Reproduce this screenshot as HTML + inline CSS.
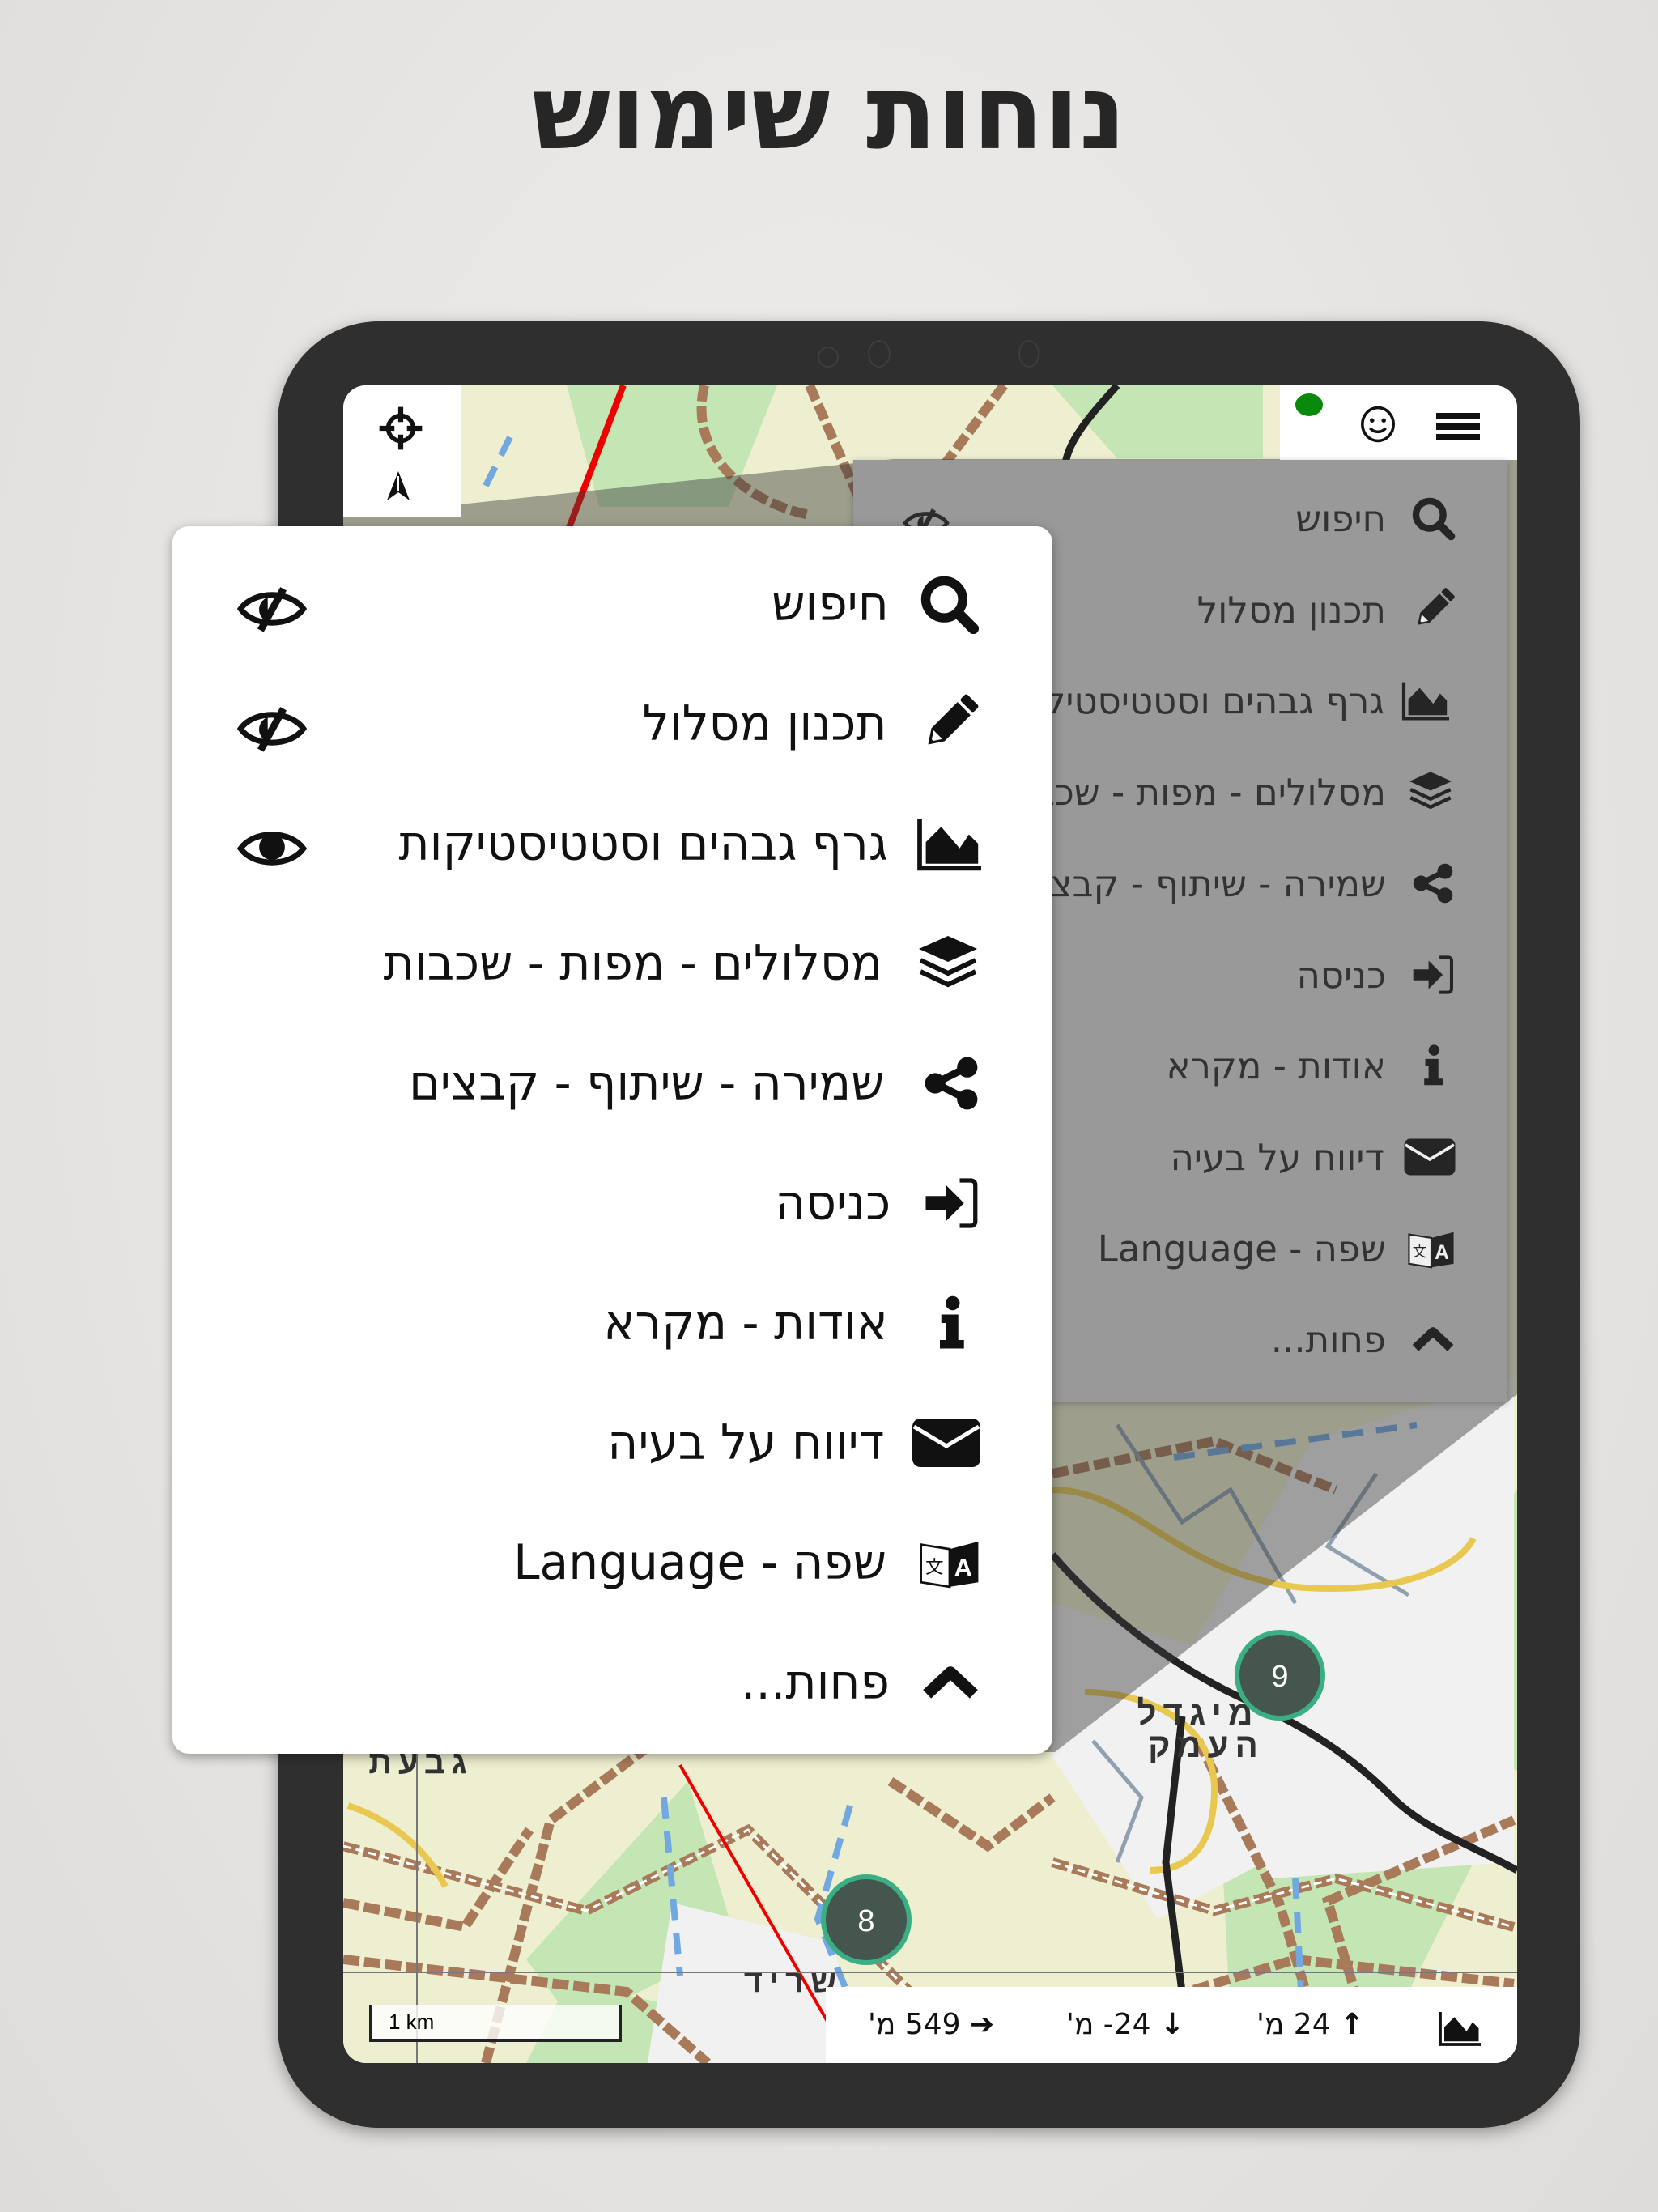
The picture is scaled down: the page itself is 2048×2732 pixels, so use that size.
<!DOCTYPE html>
<html><head><meta charset="utf-8"><style>
html,body{margin:0;padding:0}
body{width:2048px;height:2732px;position:relative;overflow:hidden;background:radial-gradient(ellipse at 50% 40%,#f1efed 0%,#e6e4e2 60%,#dedcda 100%);font-family:"Liberation Sans","Noto Sans CJK JP","DejaVu Sans",sans-serif}
.abs{position:absolute}
h1{position:absolute;left:0;width:2048px;top:60px;margin:0;text-align:center;font-size:128px;font-weight:bold;color:#262626;line-height:160px;font-family:"DejaVu Sans","Liberation Sans",sans-serif}
.tab{left:343px;top:397px;width:1609px;height:2231px;background:#2f2f2f;border-radius:125px;box-shadow:0 6px 20px rgba(0,0,0,.35)}
.screen{left:424px;top:476px;width:1450px;height:2072px;border-radius:28px;overflow:hidden;background:#eeeed2}
.row{position:absolute;display:flex;align-items:center;direction:rtl}
.pop{left:213px;top:650px;width:1087px;height:1516px;background:#fff;border-radius:20px;box-shadow:0 4px 14px rgba(0,0,0,.35)}
.pop .t{font-size:60px;color:#111;white-space:nowrap;font-family:"DejaVu Sans","Liberation Sans",sans-serif;font-weight:normal;transform:scaleX(.97)}
.gm .t{font-size:45px;color:#222;white-space:nowrap;font-family:"DejaVu Sans","Liberation Sans",sans-serif}
.bt{position:absolute;white-space:nowrap;direction:ltr;unicode-bidi:bidi-override}
</style></head><body>
<svg width="0" height="0" style="position:absolute">
<defs>
<symbol id="srch" viewBox="0 0 40 40"><circle cx="17" cy="17" r="12" fill="none" stroke="#111" stroke-width="6"/><path d="M26 26l10 10" stroke="#111" stroke-width="7" stroke-linecap="round"/></symbol>
<symbol id="pen" viewBox="0 0 40 40"><g transform="rotate(45 20 20)"><rect x="14" y="-2" width="12" height="6" rx="1.5" fill="#111"/><path d="M14 6h12v24l-6 9-6-9z" fill="#111"/><path d="M16 30l4 6 4-6z" fill="#fff"/><path d="M18.5 35l1.5 3 1.5-3z" fill="#111"/></g></symbol>
<symbol id="chart" viewBox="0 0 44 40"><path d="M2 4v32h40" fill="none" stroke="#111" stroke-width="3"/><path d="M6 33l0-14 10-10 12 14 6-9 6 6v13z" fill="#111"/></symbol>
<symbol id="lay" viewBox="0 0 40 40"><path d="M20 3l18 8-18 8-18-8z" fill="#111"/><path d="M3 18l17 8 17-8M3 25l17 8 17-8" fill="none" stroke="#111" stroke-width="3"/></symbol>
<symbol id="share" viewBox="0 0 40 40"><circle cx="31" cy="9" r="7" fill="#111"/><circle cx="9" cy="20" r="7" fill="#111"/><circle cx="31" cy="31" r="7" fill="#111"/><path d="M9 20L31 9M9 20l22 11" stroke="#111" stroke-width="5"/></symbol>
<symbol id="login" viewBox="0 0 40 40"><path d="M2 15h14V7l13 13-13 13v-8H2z" fill="#111"/><path d="M26 4h8a3 3 0 013 3v26a3 3 0 01-3 3h-8" fill="none" stroke="#111" stroke-width="3"/></symbol>
<symbol id="info" viewBox="0 0 40 40"><circle cx="21" cy="6" r="5" fill="#111"/><path d="M13 14h12v18h4v6H12v-6h4V20h-3z" fill="#111"/></symbol>
<symbol id="mail" viewBox="0 0 44 32"><rect x="1" y="1" width="42" height="30" rx="5" fill="#111"/><path d="M2 6l20 12 20-12" fill="none" stroke="#fff" stroke-width="2.5"/></symbol>
<symbol id="lang" viewBox="0 0 44 40"><path d="M3 8l19 3v25L3 33z" fill="#fff" stroke="#111" stroke-width="1.5"/><path d="M22 11l19-5v27l-19 3z" fill="#111"/><text x="31" y="29" font-size="17" font-weight="bold" fill="#fff" text-anchor="middle" font-family="Liberation Sans">A</text><text x="12" y="27" font-size="12" fill="#111" text-anchor="middle" font-family="Noto Sans CJK JP">文</text></symbol>
<symbol id="up" viewBox="0 0 40 40"><path d="M4 28l16-15 16 15" fill="none" stroke="#111" stroke-width="8" stroke-linejoin="round"/></symbol>
<symbol id="eyes" viewBox="0 0 50 34"><path d="M3 17C12 4 38 4 47 17 38 30 12 30 3 17z" fill="none" stroke="#111" stroke-width="4"/><path d="M22 9a9 9 0 000 17" fill="#111"/><path d="M33 3L17 32" stroke="#111" stroke-width="5"/></symbol>
<symbol id="eye" viewBox="0 0 50 34"><path d="M3 17C12 4 38 4 47 17 38 30 12 30 3 17z" fill="none" stroke="#111" stroke-width="4"/><circle cx="25" cy="16" r="9" fill="#111"/></symbol>
</defs></svg>

<h1>נוחות שימוש</h1>
<div class="abs tab"></div>
<div class="abs" style="left:1010px;top:428px;width:22px;height:22px;border-radius:50%;border:2px solid #3d3d3d"></div>
<div class="abs" style="left:1072px;top:420px;width:24px;height:30px;border-radius:50%;border:2px solid #3d3d3d"></div>
<div class="abs" style="left:1258px;top:420px;width:22px;height:30px;border-radius:50%;border:2px solid #3d3d3d"></div>

<div class="abs screen">
<svg width="1450" height="2072" viewBox="424 476 1450 2072" style="position:absolute;left:0;top:0">
<rect x="424" y="476" width="1450" height="2072" fill="#eeeed0"/>
<g fill="#c4e6b4">
<path d="M700 476h260l-60 150h-160z"/><path d="M1300 476h260v90h-180z"/><path d="M1050 1800h200v250h-200z"/>
<path d="M1500 2100l300-100 70 200-150 300h-200z"/><path d="M850 2200l60 200-200 100-60-80z"/><path d="M1900 1800l0 400-200-100z"/>
<path d="M700 2450l250 50 -50 48h-250z"/>
</g>
<g fill="#f1f1f1"><path d="M1620 1780l250-80v600l-300 20-120-250z"/><path d="M1300 1980l200 60 80 250-150 80-130-200z"/><path d="M830 2350l200 50 30 148h-260z"/></g>
<g fill="none" stroke="#a87a5a" stroke-width="12" stroke-dasharray="20 6">
<path d="M870 476C850 560 920 620 1000 636"/><path d="M1000 476l70 160"/><path d="M1240 476l-120 160"/>
<path d="M424 2280l300 80 200 -100 200 200"/><path d="M424 2420l350 40 100 88"/><path d="M600 2548l80-300 160-120"/>
<path d="M1300 2300l200 60 150-40 220 60"/><path d="M1480 2150l100 200 60 200"/><path d="M1700 2548l-60-200 230-100"/>
<path d="M1300 1820l200-40 150 60"/><path d="M1400 2480l200-60 270 30"/>
<path d="M424 2350l150 30 80-120"/><path d="M1100 2200l120 80 80-60"/>
</g>
<g fill="none" stroke="#fff" stroke-width="3" stroke-dasharray="10 6"><path d="M424 2280l300 80 200 -100 200 200"/><path d="M1300 2300l200 60 150-40 220 60"/></g>
<g fill="none" stroke="#8fa0b0" stroke-width="5"><path d="M1380 1760l80 120 60-40 80 140"/><path d="M1700 1820l-60 90 100 60"/><path d="M1350 2150l60 70-30 80"/></g>
<g fill="none" stroke="#72a8e0" stroke-width="8" stroke-dasharray="26 16">
<path d="M600 600l30-60"/><path d="M1050 2230l-40 140 60 150"/><path d="M820 2220l20 220"/><path d="M1600 2320l10 200"/><path d="M1450 1800l300-40"/>
</g>
<g fill="none" stroke="#e8c850" stroke-width="8"><path d="M1300 1840c100 0 150 100 300 120 120 10 200-20 220-60"/><path d="M1340 2090c80 0 160 40 160 120s-40 100-80 100"/><path d="M430 2230c60 20 100 60 120 100"/></g>
<path d="M570 1000L770 476" stroke="#e00" stroke-width="8"/>
<path d="M840 2180l230 400" stroke="#e00" stroke-width="4"/>
<g fill="none" stroke="#222" stroke-width="9"><path d="M1320 600c-20-40 30-90 60-124"/><path d="M1300 1920c60 70 150 140 240 180s140 80 180 120 100 60 154 90"/><path d="M1460 2120l-20 180 20 160-60 90"/></g>
<text x="1480" y="2130" font-size="42" font-weight="bold" fill="#333" text-anchor="middle" letter-spacing="8">מיגדל</text>
<text x="1490" y="2170" font-size="42" font-weight="bold" fill="#333" text-anchor="middle" letter-spacing="8">העמק</text>
<text x="520" y="2190" font-size="40" font-weight="bold" fill="#333" text-anchor="middle" letter-spacing="8">גבעת</text>
<text x="980" y="2460" font-size="40" font-weight="bold" fill="#333" text-anchor="middle" letter-spacing="8">שריד</text>
<path d="M515 2150v398M424 2436h1450" stroke="#777" stroke-width="2"/>
<path d="M424 638L1104 567H1874V1722L1303 2164H424Z" fill="rgba(60,60,60,.45)"/>
<circle cx="1581" cy="2069" r="53" fill="#45564f" stroke="#3aaf84" stroke-width="6"/>
<text x="1581" y="2083" font-size="38" fill="#fff" text-anchor="middle">9</text>
<circle cx="1070" cy="2371" r="53" fill="#45564f" stroke="#3aaf84" stroke-width="6"/>
<text x="1070" y="2385" font-size="38" fill="#fff" text-anchor="middle">8</text>
</svg>
<div class="abs" style="left:0;top:0;width:146px;height:162px;background:#fff"></div>
<svg class="abs" style="left:40px;top:22px" width="62" height="62" viewBox="0 0 40 40"><circle cx="20" cy="20" r="10" fill="none" stroke="#111" stroke-width="3.5"/><path d="M20 3v12M20 25v12M3 20h12M25 20h12" stroke="#111" stroke-width="4"/></svg>
<svg class="abs" style="left:48px;top:104px" width="40" height="40" viewBox="0 0 40 40"><path d="M20 2L6 38l14-10 14 10z" fill="#111"/><path d="M20 8l0 18" stroke="#fff" stroke-width="2"/></svg>
<div class="abs" style="left:1157px;top:0;width:293px;height:92px;background:#fff"></div>
<div class="abs" style="left:1176px;top:10px;width:34px;height:28px;border-radius:50%;background:#0a8a0a"></div>
<svg class="abs" style="left:1254px;top:24px" width="48" height="48" viewBox="0 0 40 40"><ellipse cx="20" cy="20" rx="16" ry="17" fill="none" stroke="#111" stroke-width="3"/><circle cx="14" cy="16" r="2.3" fill="#111"/><circle cx="26" cy="16" r="2.3" fill="#111"/><path d="M12 24c4 5 12 5 16 0" fill="none" stroke="#111" stroke-width="3"/></svg>
<div class="abs" style="left:1350px;top:34px;width:54px;height:8px;background:#111"></div>
<div class="abs" style="left:1350px;top:47px;width:54px;height:8px;background:#111"></div>
<div class="abs" style="left:1350px;top:60px;width:54px;height:8px;background:#111"></div>
<div class="abs" style="left:596px;top:1978px;width:854px;height:94px;background:#fff"></div>
<div class="abs" style="left:32px;top:2000px;width:284px;height:42px;border:4px solid #222;border-top:none;background:rgba(255,255,255,.8);font-size:26px;line-height:42px;padding-left:20px;box-sizing:content-box">1 km</div>
<div class="abs" style="left:648px;top:2000px;width:750px;height:50px;font-size:36px;color:#111;line-height:50px;font-family:'DejaVu Sans',sans-serif">
<span class="bt" style="left:0">'מ 549 <b>➔</b></span>
<span class="bt" style="left:245px">'מ -24 <b>↓</b></span>
<span class="bt" style="left:480px">'מ 24 <b>↑</b></span>
</div>
<svg class="abs" style="left:1344px;top:2004px" width="72" height="50" viewBox="0 0 44 40"><use href="#chart"/></svg>
</div>

<div class="abs gm" style="left:1054px;top:568px;width:808px;height:1163px;background:#999;box-shadow:0 2px 8px rgba(0,0,0,.25);overflow:hidden">
<svg class="abs" style="left:60px;top:58px;opacity:.8" width="60" height="40" viewBox="0 0 50 34"><use href="#eyes"/></svg>
<div class="row" style="right:62px;top:47px;height:50px;opacity:.85"><svg width="60" height="56" viewBox="0 0 40 40"><use href="#srch"/></svg><span class="t" style="margin-right:28px">חיפוש</span></div>
<div class="row" style="right:62px;top:160px;height:50px;opacity:.85"><svg width="60" height="56" viewBox="0 0 40 40"><use href="#pen"/></svg><span class="t" style="margin-right:28px">תכנון מסלול</span></div>
<div class="row" style="right:62px;top:272px;height:50px;opacity:.85"><svg width="76" height="56" viewBox="0 0 44 40"><use href="#chart"/></svg><span class="t" style="margin-right:14px">גרף גבהים וסטטיסטיקות</span></div>
<div class="row" style="right:62px;top:385px;height:50px;opacity:.85"><svg width="66" height="58" viewBox="0 0 40 40"><use href="#lay"/></svg><span class="t" style="margin-right:22px">מסלולים - מפות - שכבות</span></div>
<div class="row" style="right:62px;top:498px;height:50px;opacity:.85"><svg width="60" height="54" viewBox="0 0 40 40"><use href="#share"/></svg><span class="t" style="margin-right:28px">שמירה - שיתוף - קבצים</span></div>
<div class="row" style="right:62px;top:611px;height:50px;opacity:.85"><svg width="60" height="54" viewBox="0 0 40 40"><use href="#login"/></svg><span class="t" style="margin-right:28px">כניסה</span></div>
<div class="row" style="right:62px;top:723px;height:50px;opacity:.85"><svg width="60" height="54" viewBox="0 0 40 40"><use href="#info"/></svg><span class="t" style="margin-right:28px">אודות - מקרא</span></div>
<div class="row" style="right:62px;top:836px;height:50px;opacity:.85"><svg width="68" height="48" viewBox="0 0 44 32"><use href="#mail"/></svg><span class="t" style="margin-right:22px">דיווח על בעיה</span></div>
<div class="row" style="right:62px;top:949px;height:50px;opacity:.85"><svg width="64" height="58" viewBox="0 0 44 40"><use href="#lang"/></svg><span class="t" style="margin-right:24px">שפה - Language</span></div>
<div class="row" style="right:62px;top:1061px;height:50px;opacity:.85"><svg width="60" height="54" viewBox="0 0 40 40"><use href="#up"/></svg><span class="t" style="margin-right:28px">פחות...</span></div>
</div>

<div class="abs pop">
<svg class="abs" style="left:78px;top:72px" width="90" height="60" viewBox="0 0 50 34"><use href="#eyes"/></svg>
<svg class="abs" style="left:78px;top:220px" width="90" height="60" viewBox="0 0 50 34"><use href="#eyes"/></svg>
<svg class="abs" style="left:78px;top:368px" width="90" height="60" viewBox="0 0 50 34"><use href="#eye"/></svg>
<div class="row" style="right:86px;top:64px;height:64px"><svg width="84" height="76" viewBox="0 0 40 40"><use href="#srch"/></svg><span class="t" style="margin-right:30px">חיפוש</span></div>
<div class="row" style="right:86px;top:212px;height:64px"><svg width="84" height="76" viewBox="0 0 40 40"><use href="#pen"/></svg><span class="t" style="margin-right:30px">תכנון מסלול</span></div>
<div class="row" style="right:76px;top:360px;height:64px"><svg width="100" height="76" viewBox="0 0 44 40"><use href="#chart"/></svg><span class="t" style="margin-right:18px">גרף גבהים וסטטיסטיקות</span></div>
<div class="row" style="right:86px;top:508px;height:64px"><svg width="86" height="80" viewBox="0 0 40 40"><use href="#lay"/></svg><span class="t" style="margin-right:28px">מסלולים - מפות - שכבות</span></div>
<div class="row" style="right:86px;top:656px;height:64px"><svg width="78" height="72" viewBox="0 0 40 40"><use href="#share"/></svg><span class="t" style="margin-right:34px">שמירה - שיתוף - קבצים</span></div>
<div class="row" style="right:86px;top:804px;height:64px"><svg width="78" height="70" viewBox="0 0 40 40"><use href="#login"/></svg><span class="t" style="margin-right:34px">כניסה</span></div>
<div class="row" style="right:86px;top:952px;height:64px"><svg width="78" height="70" viewBox="0 0 40 40"><use href="#info"/></svg><span class="t" style="margin-right:34px">אודות - מקרא</span></div>
<div class="row" style="right:86px;top:1100px;height:64px"><svg width="90" height="64" viewBox="0 0 44 32"><use href="#mail"/></svg><span class="t" style="margin-right:26px">דיווח על בעיה</span></div>
<div class="row" style="right:86px;top:1248px;height:64px"><svg width="82" height="76" viewBox="0 0 44 40"><use href="#lang"/></svg><span class="t" style="margin-right:30px">שפה - Language</span></div>
<div class="row" style="right:86px;top:1396px;height:64px"><svg width="80" height="72" viewBox="0 0 40 40"><use href="#up"/></svg><span class="t" style="margin-right:32px">פחות...</span></div>
</div>
</body></html>
